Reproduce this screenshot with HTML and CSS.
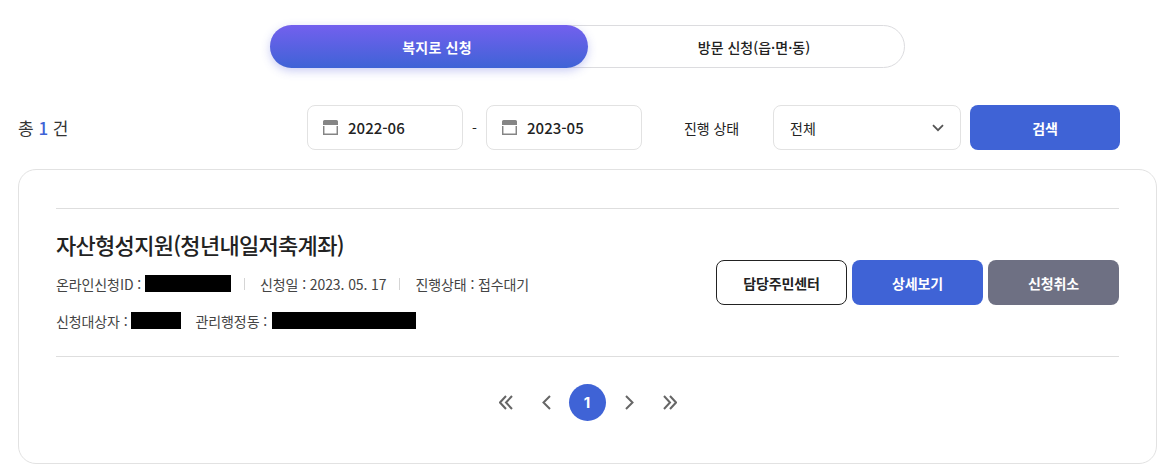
FILE: index.html
```html
<!DOCTYPE html>
<html lang="ko">
<head>
  <meta charset="UTF-8">
  <title>신청 내역</title>
  <link rel="stylesheet" href="styles.css">
</head>
<body>

  <div class="tabs">
    <a class="tab tab-active">복지로 신청</a>
    <a class="tab">방문 신청(읍·면·동)</a>
  </div>

  <div class="filter-row">
    <p class="total">총 <em>1</em> 건</p>
    <div class="filters">
      <div class="date-box">
        <svg width="15" height="15" viewBox="0 0 15 15">
          <path d="M0 5V1.500A1.500 1.500 0 0 1 1.500 0H13.500A1.500 1.500 0 0 1 15 1.500V5Z" fill="#858585"/>
          <path d="M.7 6V14.300H14.300V6" fill="none" stroke="#858585" stroke-width="1.500"/>
        </svg>
        <span>2022-06</span>
      </div>
      <span class="dash">-</span>
      <div class="date-box">
        <svg width="15" height="15" viewBox="0 0 15 15">
          <path d="M0 5V1.500A1.500 1.500 0 0 1 1.500 0H13.500A1.500 1.500 0 0 1 15 1.500V5Z" fill="#858585"/>
          <path d="M.7 6V14.300H14.300V6" fill="none" stroke="#858585" stroke-width="1.500"/>
        </svg>
        <span>2023-05</span>
      </div>
      <span class="status-label">진행 상태</span>
      <div class="select-box">
        <span>전체</span>
        <svg width="12" height="8" viewBox="0 0 12 8">
          <path d="M1 1.200L6 6.200L11 1.200" fill="none" stroke="#555" stroke-width="1.800"/>
        </svg>
      </div>
      <button class="btn btn-search">검색</button>
    </div>
  </div>

  <div class="card">
    <div class="item">
      <div class="item-info">
        <h2>자산형성지원(청년내일저축계좌)</h2>
        <div class="meta">
          <span>온라인신청ID :</span><i class="mask mask-id"></i>
          <b class="sep"></b>
          <span>신청일 : 2023. 05. 17</span>
          <b class="sep"></b>
          <span>진행상태 : 접수대기</span>
        </div>
        <div class="meta meta-second">
          <span>신청대상자 :</span><i class="mask mask-name"></i>
          <span class="office">관리행정동 :</span><i class="mask mask-office"></i>
        </div>
      </div>
      <div class="item-btns">
        <button class="btn btn-line">담당주민센터</button>
        <button class="btn btn-blue">상세보기</button>
        <button class="btn btn-gray">신청취소</button>
      </div>
    </div>

    <div class="paging">
      <svg class="page-first" width="14" height="15" viewBox="0 0 14 15"><path d="M7 1L1 7.500L7 14M13 1L7 7.500L13 14" fill="none" stroke="#666" stroke-width="2"/></svg>
      <svg class="page-prev" width="9" height="15" viewBox="0 0 9 15"><path d="M8 1L1.500 7.500L8 14" fill="none" stroke="#666" stroke-width="2"/></svg>
      <span class="page-num">1</span>
      <svg class="page-next" width="9" height="15" viewBox="0 0 9 15"><path d="M1 1L7.500 7.500L1 14" fill="none" stroke="#666" stroke-width="2"/></svg>
      <svg class="page-last" width="14" height="15" viewBox="0 0 14 15"><path d="M1 1L7 7.500L1 14M7 1L13 7.500L7 14" fill="none" stroke="#666" stroke-width="2"/></svg>
    </div>
  </div>

</body>
</html>
```

FILE: styles.css
```css
* {
  box-sizing: border-box;
}

body {
  margin: 0;
  padding: 25px 13px 0 18px;
  background-color: #fff;
  color: #222;
  font-family: "Noto Sans CJK KR", "Noto Sans", sans-serif;
  font-size: 14px;
  overflow: hidden;
}

.tabs {
  display: flex;
  width: 635px;
  height: 43px;
  margin-left: 252px;
  border: 1px solid #dcdcdf;
  border-radius: 22px;
}

.tab {
  flex: 1;
  display: flex;
  align-items: center;
  justify-content: center;
  padding-left: 16px;
  font-size: 14px;
  font-weight: 500;
  color: #222;
}

.tab-active {
  flex: 0 0 318px;
  margin: -1px 0 -1px -1px;
  border-radius: 22px;
  background: linear-gradient(180deg, #7360ee 0%, #3f63d6 100%);
  box-shadow: 0 3px 10px rgba(80, 90, 220, 0.3);
  font-weight: 700;
  letter-spacing: 0.2px;
  color: #fff;
}

.filter-row {
  display: flex;
  align-items: center;
  justify-content: space-between;
  height: 45px;
  margin-top: 37px;
  padding-right: 37px;
}

.total {
  margin: 0;
  font-size: 17px;
  color: #333;
}

.total em {
  font-style: normal;
  font-weight: 500;
  color: #3f63d6;
}

.filters {
  display: flex;
  align-items: center;
  height: 45px;
}

.date-box {
  display: flex;
  align-items: center;
  gap: 10px;
  width: 156px;
  height: 45px;
  padding-left: 15px;
  border: 1px solid #e2e2e2;
  border-radius: 8px;
  font-size: 15px;
  font-weight: 500;
}

.dash {
  width: 23px;
  text-align: center;
}

.status-label {
  margin: 0 34px 0 42px;
  font-size: 14px;
  letter-spacing: -0.1px;
}

.select-box {
  display: flex;
  align-items: center;
  justify-content: space-between;
  width: 188px;
  height: 45px;
  margin-right: 9px;
  padding: 0 16px;
  border: 1px solid #e2e2e2;
  border-radius: 8px;
  font-size: 14px;
}

.btn {
  height: 45px;
  padding: 0;
  border: none;
  border-radius: 8px;
  font-family: inherit;
  font-size: 14px;
  font-weight: 700;
  letter-spacing: -0.1px;
}

.btn-search {
  width: 150px;
  background-color: #3f63d6;
  color: #fff;
}

.card {
  margin-top: 19px;
  height: 295px;
  padding: 38px 37px 0;
  border: 1px solid #e2e2e2;
  border-radius: 18px;
}

.item {
  display: flex;
  align-items: center;
  justify-content: space-between;
  height: 149px;
  border-top: 1px solid #dedede;
  border-bottom: 1px solid #dedede;
}

.item-info {
  padding-bottom: 7px;
}

.item h2 {
  margin: 0 0 14px;
  font-size: 22px;
  font-weight: 500;
  line-height: 32px;
  letter-spacing: -0.7px;
  color: #222;
}

.meta {
  display: flex;
  align-items: center;
  height: 20px;
  font-size: 14px;
  letter-spacing: -0.1px;
  color: #444;
}

.meta-second {
  margin-top: 17px;
}

.mask {
  display: block;
  height: 17px;
  margin-left: 4px;
  background-color: #000;
}

.mask-id {
  width: 86px;
}

.mask-name {
  width: 50px;
  margin-left: 3px;
}

.mask-office {
  width: 144px;
  margin-left: 5px;
}

.office {
  margin-left: 15px;
}

.sep {
  width: 1px;
  height: 12px;
  margin: 0 15px 0 13px;
  background-color: #d5d5d5;
}

.item-btns {
  display: flex;
  gap: 5px;
}

.item-btns .btn {
  width: 131px;
}

.btn-line {
  border: 1px solid #222;
  background-color: #fff;
  color: #222;
}

.btn-blue {
  background-color: #3f63d6;
  color: #fff;
}

.btn-gray {
  background-color: #6e7083;
  color: #fff;
}

.paging {
  display: flex;
  align-items: center;
  justify-content: center;
  margin-top: 27px;
}

.page-first {
  margin-right: 29px;
}

.page-prev {
  margin-right: 18px;
}

.page-next {
  margin-left: 19px;
}

.page-last {
  margin-left: 29px;
}

.page-num {
  width: 37px;
  height: 37px;
  border-radius: 50%;
  background-color: #3f63d6;
  color: #fff;
  font-family: "Inter", sans-serif;
  font-size: 15px;
  font-weight: 700;
  line-height: 37px;
  text-align: center;
}
```
